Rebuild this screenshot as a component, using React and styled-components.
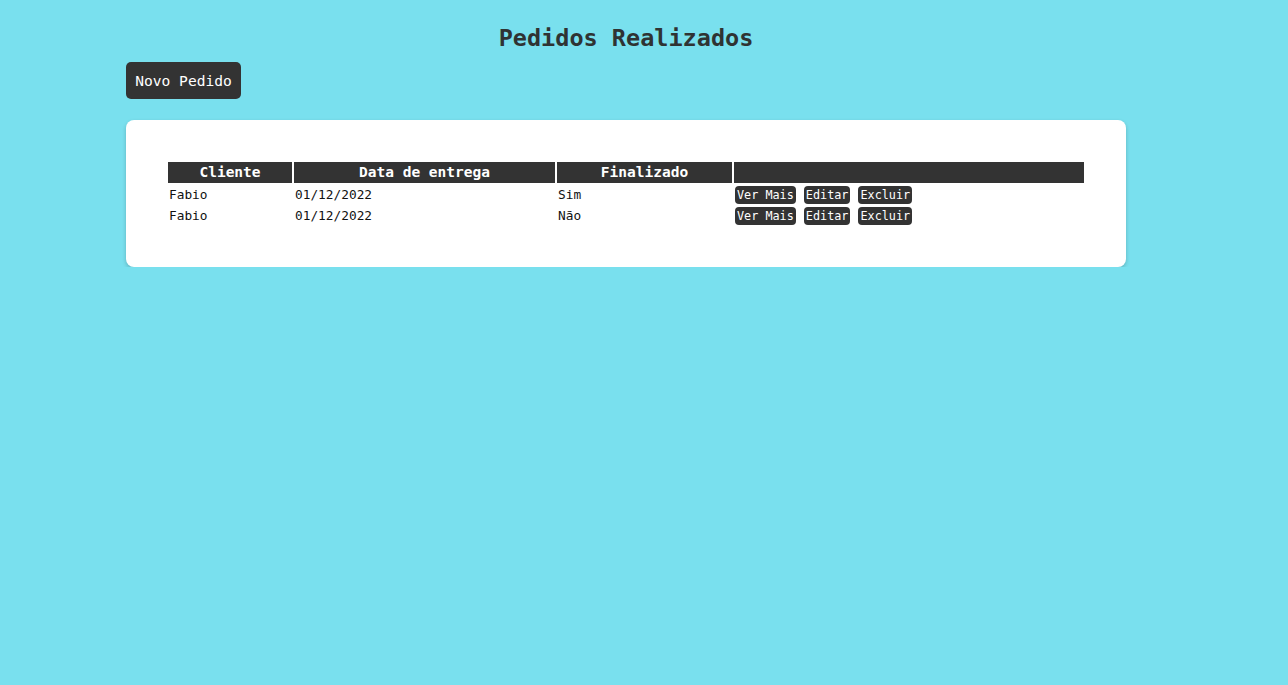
import React from 'react';
import styled, { createGlobalStyle } from 'styled-components';

const GlobalStyle = createGlobalStyle`
  html, body {
    margin: 0;
    padding: 0;
    background: #79e0ee;
    font-family: "DejaVu Sans Mono", "Liberation Mono", monospace;
  }
`;

const Page = styled.div`
  width: 1000px;
  margin-left: 126px;
  padding-top: 23px;
`;

const Title = styled.h1`
  margin: 0;
  text-align: center;
  font-size: 23.5px;
  line-height: 30px;
  font-weight: bold;
  color: #2f3333;
`;

const NewButton = styled.button`
  display: block;
  margin-top: 9px;
  width: 115px;
  height: 37px;
  padding: 0;
  border: none;
  border-radius: 5px;
  background: #333;
  color: #fff;
  font-family: inherit;
  font-size: 14.6px;
`;

const Card = styled.div`
  margin-top: 21px;
  background: #fff;
  border-radius: 8px;
  padding: 40px;
  box-shadow: 0 2px 4px rgba(0, 0, 0, 0.2);
`;

const Table = styled.table`
  width: 100%;
  border-spacing: 2px;
`;

const Th = styled.th`
  width: ${p => p.$w}px;
  background: #333;
  color: #fff;
  font-size: 14.5px;
  line-height: 19px;
  padding: 1px;
  font-weight: bold;
`;

const Td = styled.td`
  padding: 0 1px;
  font-size: 12.8px;
  line-height: 19px;
  color: #111;
  white-space: nowrap;
`;

const Actions = styled.div`
  display: flex;
  align-items: center;
  gap: 8px;
`;

const SmallButton = styled.button`
  height: 18px;
  padding: 0 2px;
  border: none;
  border-radius: 4px;
  background: #333;
  color: #fff;
  font-family: inherit;
  font-size: 11.8px;
  line-height: 18px;
`;

const pedidos = [
  { cliente: 'Fabio', data: '01/12/2022', finalizado: 'Sim' },
  { cliente: 'Fabio', data: '01/12/2022', finalizado: 'Não' },
];

export default function App() {
  return (
    <>
      <GlobalStyle />
      <Page>
        <Title>Pedidos Realizados</Title>
        <NewButton>Novo Pedido</NewButton>
        <Card>
          <Table>
            <thead>
              <tr>
                <Th $w={122}>Cliente</Th>
                <Th $w={259}>Data de entrega</Th>
                <Th $w={173}>Finalizado</Th>
                <Th $w={348}></Th>
              </tr>
            </thead>
            <tbody>
              {pedidos.map((p, i) => (
                <tr key={i}>
                  <Td>{p.cliente}</Td>
                  <Td>{p.data}</Td>
                  <Td>{p.finalizado}</Td>
                  <Td>
                    <Actions>
                      <SmallButton>Ver Mais</SmallButton>
                      <SmallButton>Editar</SmallButton>
                      <SmallButton>Excluir</SmallButton>
                    </Actions>
                  </Td>
                </tr>
              ))}
            </tbody>
          </Table>
        </Card>
      </Page>
    </>
  );
}
